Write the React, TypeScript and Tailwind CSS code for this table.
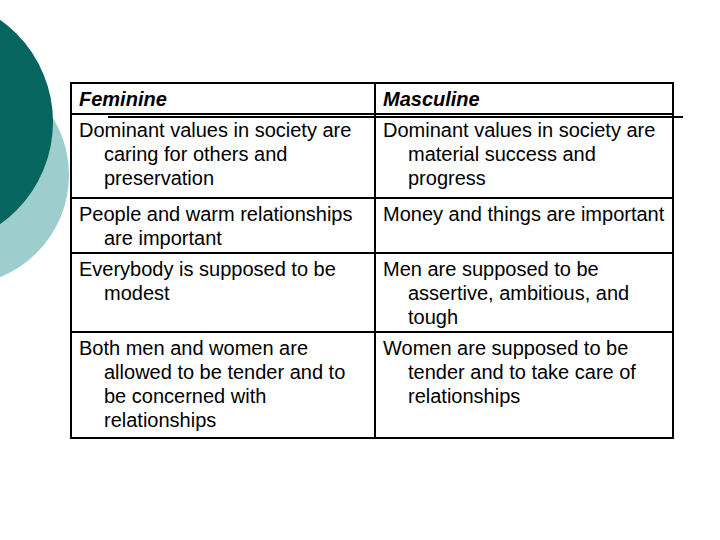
import React from 'react'

type Row = { left: string; right: string; h: string }

// hanging indent: first line flush, the wrapped lines sit 25px further in
const rows: Row[] = [
  {
    left: 'Dominant values in society are caring for others and preservation',
    right: 'Dominant values in society are material success and progress',
    h: 'h-[84px]',
  },
  {
    left: 'People and warm relationships are important',
    right: 'Money and things are important',
    h: 'h-[55px]',
  },
  {
    left: 'Everybody is supposed to be modest',
    right: 'Men are supposed to be assertive, ambitious, and tough',
    h: 'h-[79px]',
  },
  {
    left: 'Both men and women are allowed to be tender and to be concerned with relationships',
    right: 'Women are supposed to be tender and to take care of relationships',
    h: 'h-[106px]',
  },
]

function Circles() {
  return (
    <svg className="absolute left-0 top-0" width="120" height="300" viewBox="0 0 120 300">
      <circle cx="-41" cy="175" r="110" fill="#9dcdcd" />
      <circle cx="-72" cy="122" r="125" fill="#07655f" />
    </svg>
  )
}

export default function App() {
  return (
    <div
      className="relative w-[720px] h-[540px] bg-white overflow-hidden text-black"
      style={{ fontFamily: '"Liberation Sans", Arial, sans-serif' }}
    >
      <Circles />

      <div className="relative pt-[82px] pl-[70px]">
        <div className="w-[604px] border-2 border-black text-[20px] leading-[24px]">
          <div className="grid grid-cols-[304px_296px] h-[29px]">
            <div className="border-r-2 border-black pl-[7px] pt-[3px] font-bold italic">Feminine</div>
            <div className="pl-[7px] pt-[3px] font-bold italic">Masculine</div>
          </div>

          {rows.map((r, i) => (
            <div key={i} className={`grid grid-cols-[304px_296px] border-t-2 border-black ${r.h}`}>
              <div className="border-r-2 border-black pl-[32px] pr-[14px] pt-[3px] -indent-[25px]">
                {r.left}
              </div>
              <div className="pl-[32px] pr-[1px] pt-[3px] -indent-[25px]">{r.right}</div>
            </div>
          ))}
        </div>
      </div>

      {/* title underline from the slide template */}
      <div className="absolute left-[108px] top-[116px] w-[575px] h-[2px] bg-black" />
    </div>
  )
}
